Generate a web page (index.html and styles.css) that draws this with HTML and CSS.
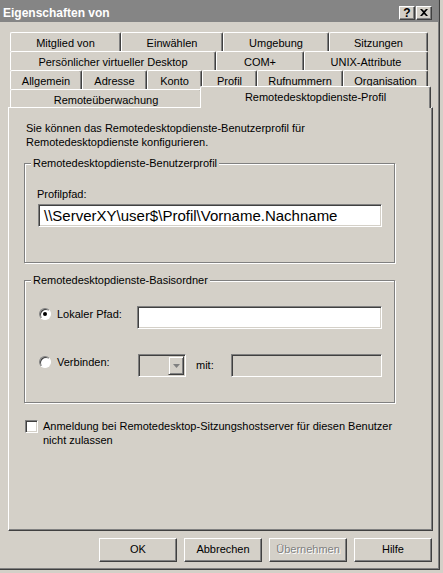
FILE: index.html
```html
<!DOCTYPE html>
<html lang="de">
<head>
<meta charset="utf-8">
<title>Eigenschaften von</title>
<link rel="stylesheet" href="styles.css">
</head>
<body>
<div class="window">
  <div class="titlebar">
    <span class="title">Eigenschaften von</span>
    <div class="tbtns">
      <span class="tbtn help">?</span>
      <span class="tbtn close"><svg width="8" height="7" viewBox="0 0 8 7"><path d="M0 0h2l2 2 2-2h2L5 3.5 8 7H6L4 5 2 7H0l3-3.5z" fill="#000"/></svg></span>
    </div>
  </div>
  <div class="content">
    <div class="tabs">
      <div class="tabrow r1">
        <div class="tab">Mitglied von</div>
        <div class="tab">Einwählen</div>
        <div class="tab">Umgebung</div>
        <div class="tab">Sitzungen</div>
      </div>
      <div class="tabrow r2">
        <div class="tab">Persönlicher virtueller Desktop</div>
        <div class="tab">COM+</div>
        <div class="tab">UNIX-Attribute</div>
      </div>
      <div class="tabrow r3">
        <div class="tab">Allgemein</div>
        <div class="tab">Adresse</div>
        <div class="tab">Konto</div>
        <div class="tab">Profil</div>
        <div class="tab">Rufnummern</div>
        <div class="tab">Organisation</div>
      </div>
      <div class="tabrow r4">
        <div class="tab">Remoteüberwachung</div>
        <div class="tab sel">Remotedesktopdienste-Profil</div>
      </div>
    </div>
    <div class="panel">
      <p class="intro">Sie können das Remotedesktopdienste-Benutzerprofil für<br>Remotedesktopdienste konfigurieren.</p>
      <fieldset class="group g1">
        <legend>Remotedesktopdienste-Benutzerprofil</legend>
        <div class="gbody">
          <div class="lbl">Profilpfad:</div>
          <div class="input path">\\ServerXY\user$\Profil\Vorname.Nachname</div>
        </div>
      </fieldset>
      <fieldset class="group g2">
        <legend>Remotedesktopdienste-Basisordner</legend>
        <div class="gbody2">
          <div class="row row1">
            <div class="rlabel"><span class="radio checked"></span><span>Lokaler Pfad:</span></div>
            <div class="input local"></div>
          </div>
          <div class="row row2">
            <div class="rlabel"><span class="radio"></span><span>Verbinden:</span></div>
            <div class="combo"><span class="cbtn"><svg width="7" height="4" viewBox="0 0 7 4"><path d="M0 0h7L3.5 4z" fill="#808080"/></svg></span></div>
            <span class="mit">mit:</span>
            <div class="input disabled"></div>
          </div>
        </div>
      </fieldset>
      <div class="checkrow">
        <span class="check"></span>
        <span class="ctext">Anmeldung bei Remotedesktop-Sitzungshostserver für diesen Benutzer<br>nicht zulassen</span>
      </div>
    </div>
    <div class="buttons">
      <div class="btn">OK</div>
      <div class="btn">Abbrechen</div>
      <div class="btn dis">Übernehmen</div>
      <div class="btn">Hilfe</div>
    </div>
  </div>
</div>
</body>
</html>
```
FILE: styles.css
```css
* { box-sizing: border-box; }
html, body { margin: 0; padding: 0; }
body {
  width: 443px;
  height: 573px;
  overflow: hidden;
  background: #d4d0c8;
  font-family: "Liberation Sans", Arial, sans-serif;
  font-size: 11px;
  color: #000;
}
.window {
  width: 440px;
  height: 570px;
  background: #d4d0c8;
  border-right: 1px solid #404040;
  border-bottom: 1px solid #404040;
  box-shadow: inset -1px -1px #808080;
  display: flex;
  flex-direction: column;
}
.titlebar {
  height: 22px;
  margin-right: 1px;
  background: #858585;
  display: flex;
  align-items: center;
  padding: 3px 6px 0 3px;
}
.title {
  flex: 1;
  color: #fff;
  font-family: "Liberation Sans", Arial, sans-serif;
  font-weight: bold;
  font-size: 12px;
  line-height: 16px;
}
.tbtns { display: flex; gap: 1px; }
.tbtn {
  width: 16px;
  height: 14px;
  background: #d4d0c8;
  border: 1px solid;
  border-color: #fff #404040 #404040 #fff;
  box-shadow: inset -1px -1px #808080;
  display: flex;
  align-items: center;
  justify-content: center;
  font-weight: bold;
  font-size: 12px;
  line-height: 12px;
}
.content {
  flex: 1;
  padding: 10px 0 0 8px;
}
.tabs {
  width: 425px;
  padding-left: 2px;
}
.tabrow {
  display: grid;
  width: 418px;
  height: 19px;
}
.r1 { grid-template-columns: 111px 102px 106px 99px; }
.r2 { grid-template-columns: 206px 88px 124px; }
.r3 { grid-template-columns: 72px 65px 55px 55px 86px 85px; }
.r4 { grid-template-columns: 192px 227px; height: 18px; grid-template-rows: 18px; }
.tab {
  background: #d4d0c8;
  border-top: 1px solid #fff;
  border-left: 1px solid #fff;
  border-right: 1px solid #404040;
  box-shadow: inset -1px 0 #808080;
  border-radius: 2px 2px 0 0;
  text-align: center;
  padding-top: 3px;
  line-height: 14px;
  white-space: nowrap;
}
.tab.sel {
  position: relative;
  z-index: 1;
  height: 22px;
  margin: -3px -2px 0 -2px;
  align-self: start;
  padding-top: 3px;
}
.panel {
  width: 425px;
  height: 424px;
  border: 1px solid;
  border-color: #fff #404040 #404040 #fff;
  box-shadow: inset -1px -1px #808080;
  padding: 13px 0 0 15px;
}
.intro {
  margin: 0;
  padding-left: 2px;
  line-height: 14px;
}
.group {
  margin: 7px 0 0 0;
  padding: 0;
  width: 371px;
  border: 1px solid #808080;
  box-shadow: inset 1px 1px #fff, 1px 1px #fff;
  min-width: 0;
}
.group legend {
  margin-left: 6px;
  padding: 0 2px;
  line-height: 14px;
  background: #d4d0c8;
}
.gbody { padding: 17px 0 35px 12px; }
.lbl { line-height: 14px; }
.input {
  background: #fff;
  border: 1px solid;
  border-color: #808080 #fff #fff #808080;
  box-shadow: inset 1px 1px #404040, inset -1px -1px #d4d0c8;
  height: 23px;
}
.input.path {
  margin: 3px 0 0 1px;
  width: 344px;
  font-size: 15px;
  line-height: 21px;
  padding-left: 5px;
  white-space: nowrap;
}
.g2 { margin-top: 10px; }
.gbody2 { padding: 19px 0 25px 14px; }
.row { display: flex; align-items: flex-start; height: 23px; }
.row2 { margin-top: 25px; }
.rlabel {
  display: flex;
  align-items: center;
  gap: 6px;
  width: 98px;
  height: 14px;
  margin-top: 1px;
  line-height: 14px;
}
.radio {
  width: 12px;
  height: 12px;
  border-radius: 50%;
  background: #fff;
  border: 1px solid;
  border-color: #808080 #fff #fff #808080;
  box-shadow: inset 1px 1px #404040;
  display: flex;
  align-items: center;
  justify-content: center;
}
.radio.checked::after {
  content: "";
  width: 4px;
  height: 4px;
  border-radius: 50%;
  background: #000;
}
.input.local { width: 245px; }
.combo {
  width: 48px;
  height: 23px;
  margin-left: 1px;
  background: #d4d0c8;
  border: 1px solid;
  border-color: #808080 #fff #fff #808080;
  box-shadow: inset 1px 1px #404040;
  display: flex;
  justify-content: flex-end;
  padding: 1px 1px 1px 0;
}
.cbtn {
  width: 16px;
  height: 19px;
  border: 1px solid;
  border-color: #d4d0c8 #404040 #404040 #d4d0c8;
  box-shadow: inset 1px 1px #fff, inset -1px -1px #808080;
  display: flex;
  align-items: center;
  justify-content: center;
}
.mit {
  margin-left: 10px;
  width: 35px;
  line-height: 14px;
  margin-top: 4px;
}
.input.disabled { width: 151px; background: #d4d0c8; }
.checkrow {
  display: flex;
  align-items: flex-start;
  margin: 16px 0 0 1px;
  gap: 5px;
}
.check {
  width: 13px;
  height: 13px;
  margin-top: 1px;
  background: #fff;
  border: 1px solid;
  border-color: #808080 #fff #fff #808080;
  box-shadow: inset 1px 1px #404040, inset -1px -1px #d4d0c8;
}
.ctext { line-height: 14px; }
.buttons {
  display: flex;
  gap: 7px;
  margin: 7px 0 0 91px;
}
.btn {
  width: 78px;
  height: 24px;
  border: 1px solid;
  border-color: #fff #404040 #404040 #fff;
  box-shadow: inset -1px -1px #808080;
  text-align: center;
  line-height: 21px;
}
.btn.dis {
  color: #808080;
  text-shadow: 1px 1px #fff;
}
```
